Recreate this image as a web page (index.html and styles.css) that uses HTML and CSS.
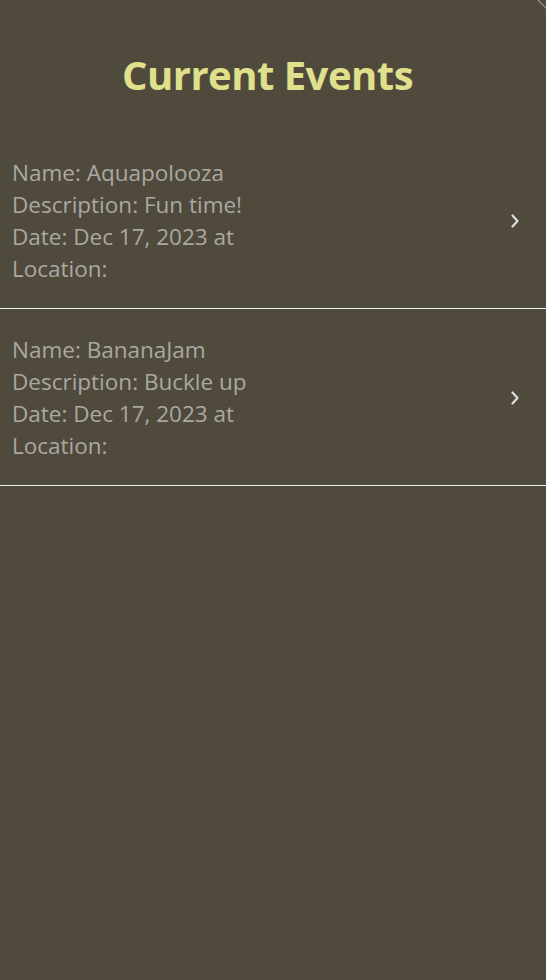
FILE: index.html
```html
<!DOCTYPE html>
<html lang="en">
<head>
<meta charset="utf-8">
<title>Current Events</title>
<link rel="stylesheet" href="styles.css">
</head>
<body>
<div class="page">
  <svg class="corner" width="10" height="10" viewBox="0 0 10 10"><path d="M2 0 L10 8" stroke="#9a968c" stroke-width="1.2" fill="none"/></svg>
  <header class="header">
    <h1 class="title">Current Events</h1>
  </header>
  <ul class="list">
    <li class="item">
      <div class="info">
        <div class="line">Name: Aquapolooza</div>
        <div class="line">Description: Fun time!</div>
        <div class="line">Date: Dec 17, 2023 at</div>
        <div class="line">Location:</div>
      </div>
      <svg class="chev" width="10" height="14" viewBox="0 0 10 14"><path d="M2.5 1.5 L7.5 7 L2.5 12.5" stroke="#dcdcdc" stroke-width="2.2" fill="none" stroke-linecap="round" stroke-linejoin="round"/></svg>
    </li>
    <li class="item">
      <div class="info">
        <div class="line">Name: BananaJam</div>
        <div class="line">Description: Buckle up</div>
        <div class="line">Date: Dec 17, 2023 at</div>
        <div class="line">Location:</div>
      </div>
      <svg class="chev" width="10" height="14" viewBox="0 0 10 14"><path d="M2.5 1.5 L7.5 7 L2.5 12.5" stroke="#dcdcdc" stroke-width="2.2" fill="none" stroke-linecap="round" stroke-linejoin="round"/></svg>
    </li>
  </ul>
</div>
</body>
</html>
```

FILE: styles.css
```css
html, body {
  margin: 0;
  padding: 0;
  background: #504a3c;
}
body {
  font-family: "Open Sans", "Noto Sans", sans-serif;
  width: 546px;
  height: 980px;
  overflow: hidden;
}
.page {
  position: relative;
  min-height: 980px;
  background: #504a3c;
}
.corner {
  position: absolute;
  top: 0;
  right: 0;
}
.header {
  height: 132px;
  display: flex;
  align-items: center;
  justify-content: center;
  padding-right: 11px;
}
.title {
  margin: 0;
  padding-top: 16px;
  font-size: 40px;
  font-weight: 700;
  color: #e0e08c;
  letter-spacing: -0.5px;
}
.list {
  list-style: none;
  margin: 0;
  padding: 0;
}
.item {
  display: flex;
  align-items: center;
  justify-content: space-between;
  padding: 25px 26px 23px 12px;
  border-bottom: 1px solid #f0f0f0;
}
.line {
  font-size: 22.5px;
  line-height: 32px;
  color: #aaa8a3;
}
.chev {
  display: block;
}
```
